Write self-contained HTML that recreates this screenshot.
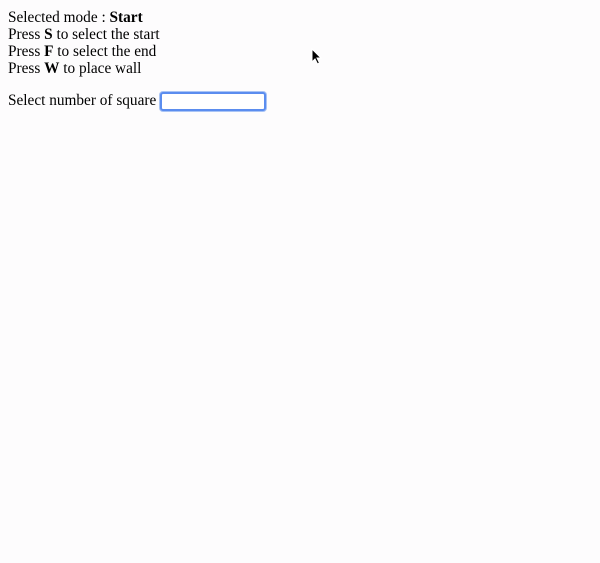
<!DOCTYPE html>
<html><head><style>
body{margin:0;background:#fdfcfd;font-family:"Liberation Serif",serif;font-size:15.3px;line-height:17px;color:#000}
.w{position:absolute;left:8px;top:9px}
input{position:absolute;left:160px;top:92px;width:102px;height:15px;border:2px solid #5b8def;border-radius:3px;box-shadow:0 0 0 1px #a9c4f5;padding:0;margin:0;background:#fff;outline:none}
.l{position:absolute;left:8px;top:92px}
</style></head><body>
<div class="w">Selected mode : <b>Start</b><br>Press <b>S</b> to select the start<br>Press <b>F</b> to select the end<br>Press <b>W</b> to place wall</div>
<div class="l">Select number of square</div>
<input type="text">
<svg style="position:absolute;left:311px;top:48px" width="12" height="18" viewBox="0 0 12 18"><path d="M1 1 L1 14 L4 11 L6.5 16 L8.5 15 L6 10 L10 10 Z" fill="#000" stroke="#fff" stroke-width="1"/></svg>
</body></html>
